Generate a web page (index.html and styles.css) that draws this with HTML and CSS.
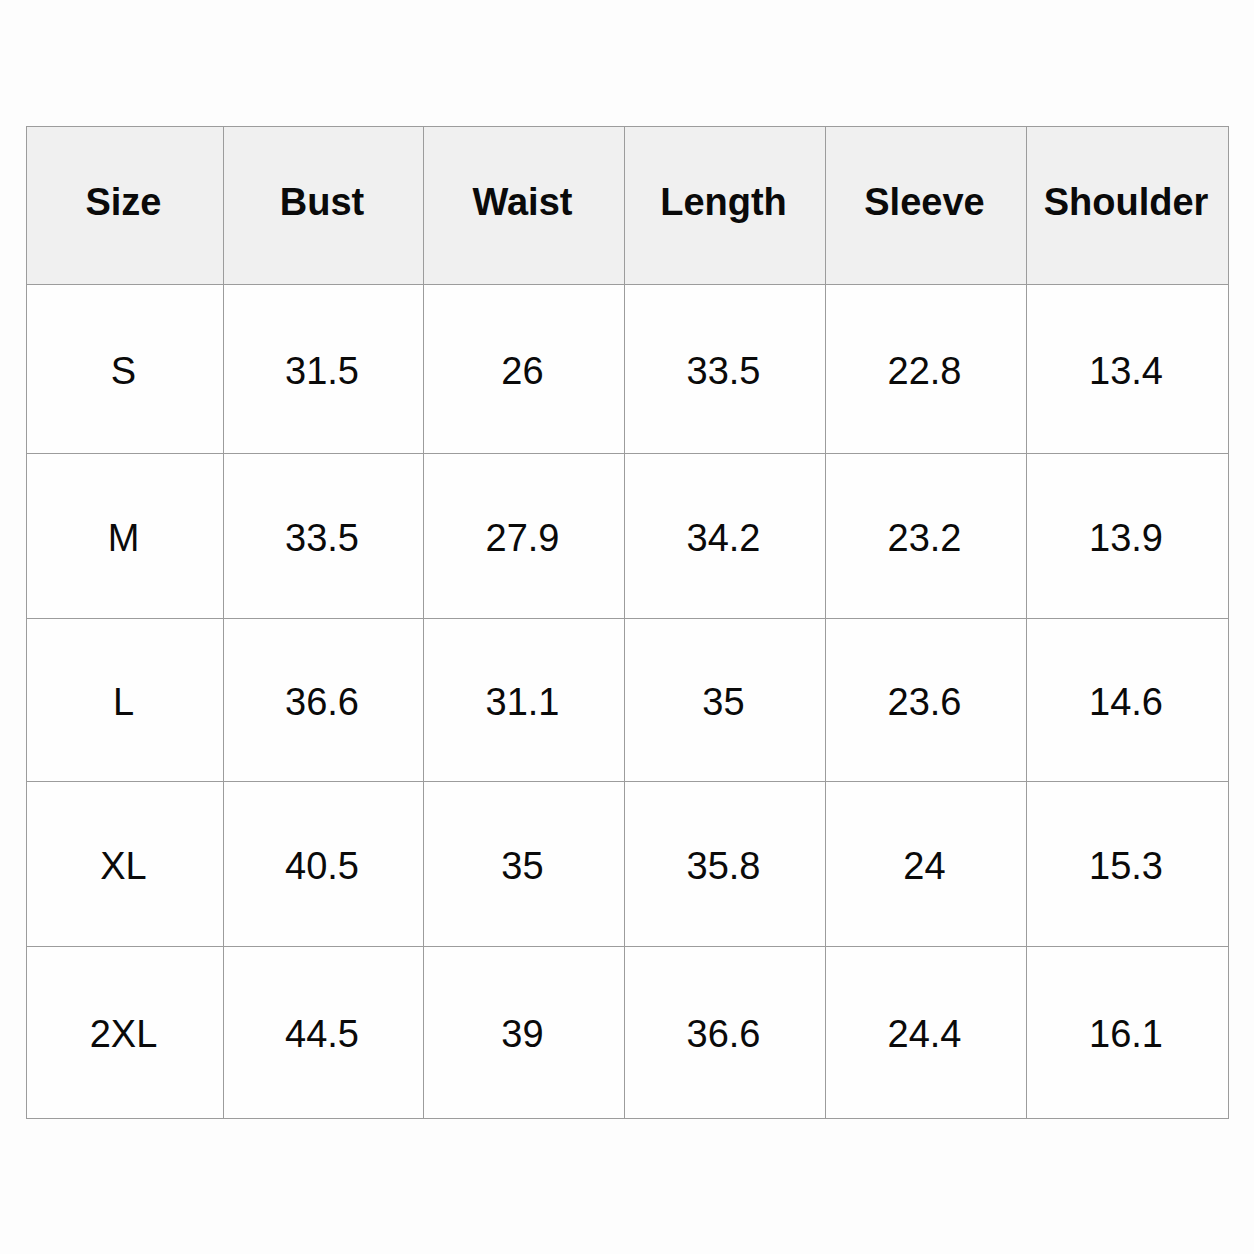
FILE: index.html
```html
<!DOCTYPE html>
<html>
<head>
<meta charset="utf-8">
<link rel="stylesheet" href="styles.css">
</head>
<body>
<div class="page">
<table class="chart">
<colgroup>
<col class="c1"><col class="c2"><col class="c3"><col class="c4"><col class="c5"><col class="c6">
</colgroup>
<thead>
<tr class="r0"><th>Size</th><th>Bust</th><th>Waist</th><th>Length</th><th>Sleeve</th><th>Shoulder</th></tr>
</thead>
<tbody>
<tr class="r1"><td>S</td><td>31.5</td><td>26</td><td>33.5</td><td>22.8</td><td>13.4</td></tr>
<tr class="r2"><td>M</td><td>33.5</td><td>27.9</td><td>34.2</td><td>23.2</td><td>13.9</td></tr>
<tr class="r3"><td>L</td><td>36.6</td><td>31.1</td><td>35</td><td>23.6</td><td>14.6</td></tr>
<tr class="r4"><td>XL</td><td>40.5</td><td>35</td><td>35.8</td><td>24</td><td>15.3</td></tr>
<tr class="r5"><td>2XL</td><td>44.5</td><td>39</td><td>36.6</td><td>24.4</td><td>16.1</td></tr>
</tbody>
</table>
</div>
</body>
</html>
```
FILE: styles.css
```css
html, body {
  margin: 0;
  padding: 0;
  background: #fdfdfd;
}
.page {
  padding: 126px 0 0 26px;
}
.chart {
  border-collapse: collapse;
  table-layout: fixed;
  width: 1203px;
  font-family: "Liberation Sans", Arial, sans-serif;
  color: #0a0a0a;
}
.c1 { width: 197px; }
.c2 { width: 200px; }
.c3 { width: 201px; }
.c4 { width: 201px; }
.c5 { width: 201px; }
.c6 { width: 202px; }
.chart th, .chart td {
  border: 1px solid #9c9c9c;
  text-align: center;
  vertical-align: middle;
  font-size: 38px;
}
.chart th {
  background: #f0f0f0;
  font-weight: bold;
  padding: 0 3px 6px 0;
}
.chart td {
  background: #fefefe;
  font-weight: normal;
  padding: 4px 3px 0 0;
}
.r0 { height: 158px; }
.r1 { height: 169px; }
.r2 { height: 165px; }
.r3 { height: 163px; }
.r4 { height: 165px; }
.r5 { height: 172px; }
```
